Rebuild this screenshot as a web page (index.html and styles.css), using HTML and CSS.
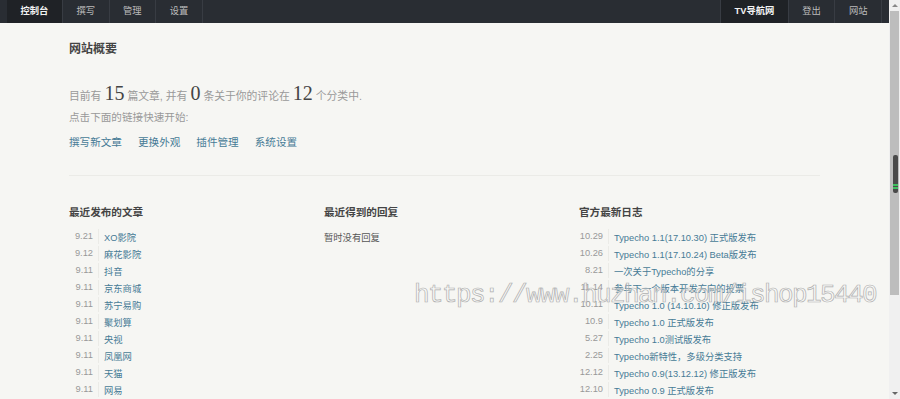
FILE: index.html
```html
<!DOCTYPE html>
<html lang="zh-CN">
<head>
  <meta charset="UTF-8" />
  <meta name="viewport" content="width=device-width, initial-scale=1.0" />
  <title>控制台</title>
  <link rel="stylesheet" href="styles.css">
</head>
<body>
  <div class="page">
    <div class="main">

      <!-- === TOP NAV === -->
      <div class="topbar">
        <ul class="nav nav-left">
          <li class="active">控制台</li>
          <li>撰写</li>
          <li>管理</li>
          <li>设置</li>
        </ul>
        <ul class="nav nav-right">
          <li class="active">TV导航网</li>
          <li>登出</li>
          <li>网站</li>
        </ul>
      </div>

      <!-- === OVERVIEW === -->
      <div class="content">
        <h2 class="title">网站概要</h2>
        <p class="stats">目前有<em>15</em>篇文章, 并有<em>0</em>条关于你的评论在<em>12</em>个分类中.</p>
        <p class="hint">点击下面的链接快速开始:</p>
        <ul class="quick">
          <li><a href="#">撰写新文章</a></li>
          <li><a href="#">更换外观</a></li>
          <li><a href="#">插件管理</a></li>
          <li><a href="#">系统设置</a></li>
        </ul>
        <div class="rule"></div>

        <div class="cols">
          <section>
            <h3>最近发布的文章</h3>
            <ul class="log">
              <li><span class="date">9.21</span><a href="#">XO影院</a></li>
              <li><span class="date">9.12</span><a href="#">麻花影院</a></li>
              <li><span class="date">9.11</span><a href="#">抖音</a></li>
              <li><span class="date">9.11</span><a href="#">京东商城</a></li>
              <li><span class="date">9.11</span><a href="#">苏宁易购</a></li>
              <li><span class="date">9.11</span><a href="#">聚划算</a></li>
              <li><span class="date">9.11</span><a href="#">央视</a></li>
              <li><span class="date">9.11</span><a href="#">凤凰网</a></li>
              <li><span class="date">9.11</span><a href="#">天猫</a></li>
              <li><span class="date">9.11</span><a href="#">网易</a></li>
            </ul>
          </section>
          <section>
            <h3>最近得到的回复</h3>
            <ul class="log">
              <li class="empty">暂时没有回复</li>
            </ul>
          </section>
          <section>
            <h3>官方最新日志</h3>
            <ul class="log">
              <li><span class="date">10.29</span><a href="#">Typecho 1.1(17.10.30) 正式版发布</a></li>
              <li><span class="date">10.26</span><a href="#">Typecho 1.1(17.10.24) Beta版发布</a></li>
              <li><span class="date">8.21</span><a href="#">一次关于Typecho的分享</a></li>
              <li><span class="date">11.14</span><a href="#">参与下一个版本开发方向的投票</a></li>
              <li><span class="date">10.11</span><a href="#">Typecho 1.0 (14.10.10) 修正版发布</a></li>
              <li><span class="date">10.9</span><a href="#">Typecho 1.0 正式版发布</a></li>
              <li><span class="date">5.27</span><a href="#">Typecho 1.0测试版发布</a></li>
              <li><span class="date">2.25</span><a href="#">Typecho新特性，多级分类支持</a></li>
              <li><span class="date">12.12</span><a href="#">Typecho 0.9(13.12.12) 修正版发布</a></li>
              <li><span class="date">12.10</span><a href="#">Typecho 0.9 正式版发布</a></li>
            </ul>
          </section>
        </div>
      </div>

      <div class="watermark">https://www.huzhan.com/ishop15440</div>
    </div>

    <!-- === SCROLLBAR === -->
    <div class="scrollbar">
      <div class="sb-btn"><span class="arrow-up"></span></div>
      <div class="sb-track"><div class="sb-thumb"></div></div>
      <div class="sb-rest"></div>
      <div class="sb-btn"><span class="arrow-down"></span></div>
    </div>
  </div>
</body>
</html>
```

FILE: styles.css
```css
* {
  margin: 0;
  padding: 0;
  box-sizing: border-box;
}

body, html {
  height: 100%;
  overflow: hidden;
}

body {
  background: #f6f6f3;
  color: #444;
  font-family: "Liberation Sans", "Noto Sans CJK SC", sans-serif;
  font-size: 9.3px;
}

a {
  color: #467b96;
  text-decoration: none;
}

ul {
  list-style: none;
}

.page {
  display: flex;
  height: 399px;
}

.main {
  flex: 1;
  position: relative;
  overflow: hidden;
}

/* === NAV === */
.topbar {
  display: flex;
  justify-content: space-between;
  height: 23px;
  padding: 0 7px;
  background: #292d33;
}

.nav {
  display: flex;
}

.nav li {
  padding: 0 13.5px;
  line-height: 23px;
  color: #bbb;
  border-right: 1px solid #383c43;
}

.nav-right li:first-child {
  border-left: 1px solid #383c43;
}

.nav li.active {
  background: #1f2226;
  color: #f2f2f2;
  font-weight: bold;
}

/* === CONTENT === */
.content {
  padding-left: 69px;
}

.title {
  margin-top: 18px;
  font-size: 12px;
  line-height: 16px;
  color: #444;
}

.stats {
  height: 24px;
  margin-top: 27px;
  font-size: 10.8px;
  line-height: 24px;
  color: #999;
}

.stats em {
  font-style: normal;
  font-family: "Liberation Serif", serif;
  font-size: 20px;
  line-height: 0;
  color: #444;
  margin: 0 3px;
}

.hint {
  margin-top: 1px;
  font-size: 10.6px;
  line-height: 16px;
  color: #999;
}

.quick {
  display: flex;
  gap: 16px;
  margin-top: 9px;
  font-size: 10.6px;
  line-height: 16px;
}

.rule {
  width: 751px;
  height: 1px;
  margin-top: 25px;
  background: #ebebe7;
}

.cols {
  display: grid;
  grid-template-columns: repeat(3, 255px);
  margin-top: 28px;
}

.cols h3 {
  font-size: 10.6px;
  line-height: 16px;
  color: #444;
}

.log {
  margin-top: 8px;
}

.log li {
  display: flex;
  height: 17px;
  align-items: center;
  white-space: nowrap;
}

.log .date {
  width: 30px;
  padding-right: 5px;
  text-align: right;
  line-height: 15px;
  color: #999;
  border-right: 1px solid #ebebe7;
}

.log a {
  padding-left: 5px;
}

.log li.empty {
  color: #555;
}

/* === WATERMARK === */
.watermark {
  position: absolute;
  left: 414px;
  top: 280px;
  font-family: "Liberation Mono", monospace;
  font-size: 26px;
  letter-spacing: -1.6px;
  color: rgba(255, 255, 255, 0.25);
  -webkit-text-stroke: 0.7px #b0b0b0;
  pointer-events: none;
  white-space: nowrap;
}

/* === SCROLLBAR === */
.scrollbar {
  width: 11px;
  display: flex;
  flex-direction: column;
  background: #f0f0f0;
}

.sb-btn {
  height: 11px;
  display: flex;
  align-items: center;
  justify-content: center;
}

.arrow-up {
  border-left: 3px solid transparent;
  border-right: 3px solid transparent;
  border-bottom: 3px solid #888;
}

.arrow-down {
  border-left: 3px solid transparent;
  border-right: 3px solid transparent;
  border-top: 3px solid #666;
}

.sb-track {
  height: 284px;
  margin: 0 1px;
  background: #bdbdbd;
}

.sb-thumb {
  width: 5px;
  height: 38px;
  margin: 144px 0 0 3px;
  border-radius: 2px;
  background: linear-gradient(#4a4a4a 0, #4a4a4a 29px, #3fbf5f 29px, #3fbf5f 31px, #4a4a4a 31px, #4a4a4a 32px, #3fbf5f 32px, #3fbf5f 34px, #4a4a4a 34px);
}

.sb-rest {
  flex: 1;
}
```
